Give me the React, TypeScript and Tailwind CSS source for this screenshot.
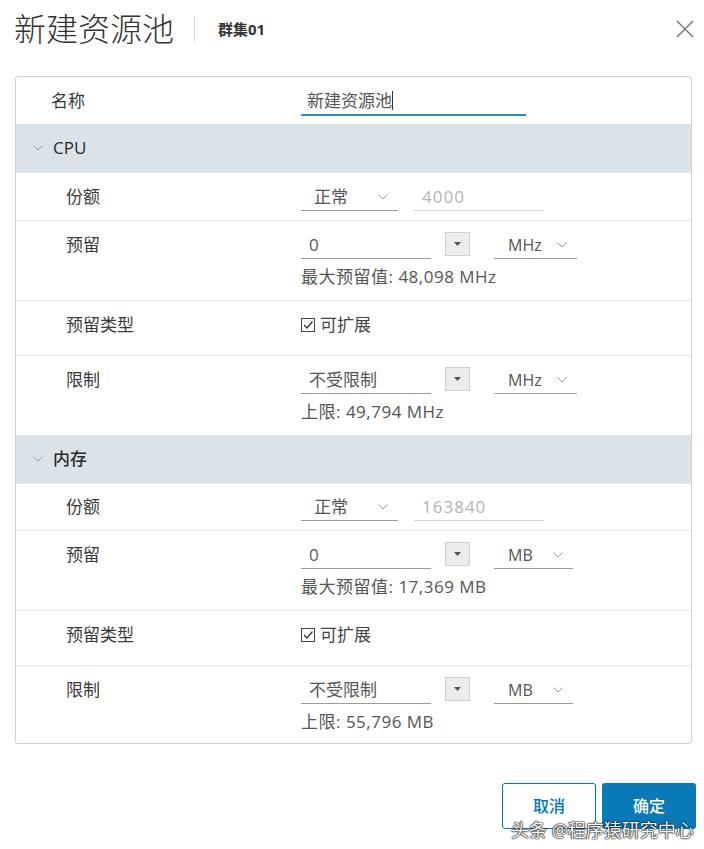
import React from "react";

const font = "font-['Open_Sans','Noto_Sans_CJK_SC',sans-serif]";

const Chevron = ({ className = "" }: { className?: string }) => (
  <svg className={className} width="10" height="6" viewBox="0 0 10 6" fill="none">
    <path d="M0.5 0.5 L5 5 L9.5 0.5" stroke="#9a9a9a" strokeWidth="1" />
  </svg>
);

const Row = ({
  label,
  sub = true,
  h,
  pt,
  children,
}: {
  label: string;
  sub?: boolean;
  h: string;
  pt: string;
  children?: React.ReactNode;
}) => (
  <div className={`flex border-t border-[#e6e6e6] ${h}`}>
    <div className={`w-[285px] shrink-0 ${sub ? "pl-[50px]" : "pl-[35px]"} ${pt}`}>
      <div className="h-[28px] flex items-center text-[17px] text-[#3a3a3a]">{label}</div>
    </div>
    <div className={`flex flex-col ${pt}`}>{children}</div>
  </div>
);

const Section = ({ title }: { title: string }) => (
  <div className="flex items-center h-[48px] bg-[#dbe3e9] pl-[17px] gap-[10px]">
    <Chevron />
    <span className="text-[17px] font-medium text-[#2a2a2a]">{title}</span>
  </div>
);

const Share = ({ value }: { value: string }) => (
  <div className="flex gap-[16px]">
    <div className="w-[97px] h-[28px] flex items-center justify-between border-b border-[#9c9c9c] pl-[13px] pr-[10px] text-[17px] text-[#555]">
      <span>正常</span>
      <Chevron />
    </div>
    <div className="w-[130px] h-[28px] flex items-center border-b border-[#d4d4d4] pl-[8px] text-[17px] tracking-[1px] text-[#b4b4b4]">
      {value}
    </div>
  </div>
);

const Spin = ({ value, unit, unitW, hint }: { value: string; unit: string; unitW: string; hint: string }) => (
  <>
    <div className="flex items-center">
      <div className="w-[130px] h-[28px] flex items-center border-b border-[#9c9c9c] pl-[8px] text-[17px] text-[#555]">
        {value}
      </div>
      <div className="ml-[14px] w-[25px] h-[24px] -mt-[2px] flex items-center justify-center bg-[#ececec] border border-[#cfcfcf]">
        <svg width="7" height="4" viewBox="0 0 7 4">
          <path d="M0 0 L7 0 L3.5 4 Z" fill="#555" />
        </svg>
      </div>
      <div className={`ml-[24px] ${unitW} h-[28px] flex items-center justify-between border-b border-[#9c9c9c] pl-[14px] pr-[10px] text-[16px] text-[#555]`}>
        <span>{unit}</span>
        <Chevron />
      </div>
    </div>
    <div className="mt-[7px] text-[17px] tracking-[0.5px] text-[#555] leading-[22px]">{hint}</div>
  </>
);

const Expand = () => (
  <div className="h-[28px] flex items-center gap-[5px] text-[17px] text-[#444]">
    <svg width="14" height="14" viewBox="0 0 14 14" fill="none">
      <rect x="0.5" y="0.5" width="13" height="13" stroke="#444" strokeWidth="1" />
      <path d="M3 7 L6 10 L11.5 3.5" stroke="#333" strokeWidth="1.3" />
    </svg>
    <span>可扩展</span>
  </div>
);

export default function App() {
  return (
    <div className={`w-[704px] h-[849px] bg-white relative ${font}`}>
      <div className="flex items-center h-[58px] pl-[14px] pr-[9px]">
        <span className="text-[32px] font-light text-[#333]">新建资源池</span>
        <div className="ml-[20px] w-px h-[26px] bg-[#d8d8d8]" />
        <span className="ml-[23px] text-[15px] font-bold text-[#333]">群集01</span>
        <button className="ml-auto w-[20px] h-[20px] flex items-center justify-center">
          <svg width="18" height="18" viewBox="0 0 18 18" fill="none">
            <path d="M1 1 L17 17 M17 1 L1 17" stroke="#777" strokeWidth="1.5" />
          </svg>
        </button>
      </div>

      <div className="mt-[18px] ml-[15px] w-[677px] border border-[#cfcfcf] rounded-[3px] overflow-hidden">
        <div className="flex items-center h-[47px]">
          <div className="w-[285px] pl-[35px] text-[17px] text-[#3a3a3a]">名称</div>
          <div className="w-[225px] h-[28px] mt-[2px] flex items-center border-b-2 border-[#2a8ec6] pl-[6px] text-[17px] text-[#555]">
            新建资源池<span className="w-px h-[19px] bg-[#333]" />
          </div>
        </div>

        <Section title="CPU" />
        <Row label="份额" h="h-[48px]" pt="pt-[10px]">
          <Share value="4000" />
        </Row>
        <Row label="预留" h="h-[80px]" pt="pt-[10px]">
          <Spin value="0" unit="MHz" unitW="w-[83px]" hint="最大预留值: 48,098 MHz" />
        </Row>
        <Row label="预留类型" h="h-[55px]" pt="pt-[10px]">
          <Expand />
        </Row>
        <Row label="限制" h="h-[80px]" pt="pt-[10px]">
          <Spin value="不受限制" unit="MHz" unitW="w-[83px]" hint="上限: 49,794 MHz" />
        </Row>

        <Section title="内存" />
        <Row label="份额" h="h-[47px]" pt="pt-[9px]">
          <Share value="163840" />
        </Row>
        <Row label="预留" h="h-[80px]" pt="pt-[10px]">
          <Spin value="0" unit="MB" unitW="w-[79px]" hint="最大预留值: 17,369 MB" />
        </Row>
        <Row label="预留类型" h="h-[55px]" pt="pt-[10px]">
          <Expand />
        </Row>
        <Row label="限制" h="h-[78px]" pt="pt-[10px]">
          <Spin value="不受限制" unit="MB" unitW="w-[79px]" hint="上限: 55,796 MB" />
        </Row>
      </div>

      <div className="flex justify-end gap-[6px] mt-[39px] pr-[8px]">
        <button className="w-[94px] h-[46px] rounded-[3px] border border-[#0079b8] text-[#0079b8] text-[16px] font-medium bg-white">
          取消
        </button>
        <button className="w-[94px] h-[46px] rounded-[3px] bg-[#0a79b8] text-white text-[16px] font-medium">
          确定
        </button>
      </div>

      <div className="absolute left-[511px] top-[817px] text-[18px] text-white [text-shadow:0_0_2px_#000,0_0_1px_#000,0_0_1px_#000]">
        头条 @程序猿研究中心
      </div>
    </div>
  );
}
